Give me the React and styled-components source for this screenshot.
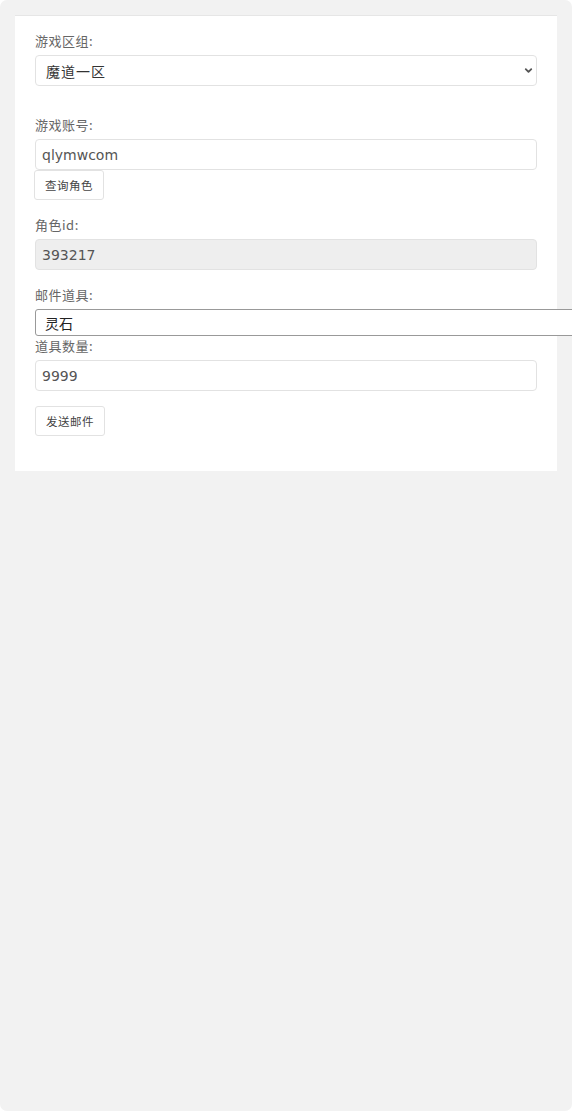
import React from "react";
import styled, { createGlobalStyle } from "styled-components";
import { ChevronDown } from "lucide-react";

const GlobalStyle = createGlobalStyle`
  html {
    background: #ffffff;
  }
  body {
    margin: 0;
    min-height: 1111px;
    background: #f2f2f2;
    border-radius: 7px;
    overflow-x: hidden;
    font-family: "DejaVu Sans", "Noto Sans CJK SC", sans-serif;
    color: #555;
  }
  * {
    box-sizing: border-box;
  }
`;

const Page = styled.div`
  padding: 15px;
`;

const Card = styled.form`
  background: #fff;
  border-top: 1px solid #e6e6e6;
  padding: 16px 20px 35px;
  display: flex;
  flex-direction: column;
`;

const Group = styled.div`
  display: flex;
  flex-direction: column;
  align-items: flex-start;
  margin-bottom: ${(p) => p.gap || 0}px;
`;

const Label = styled.label`
  font-family: "Noto Sans CJK SC", sans-serif;
  font-size: 13px;
  line-height: 18px;
  color: #666;
  margin-bottom: 5px;
  letter-spacing: 0.5px;
`;

const SelectWrap = styled.div`
  position: relative;
  width: 100%;
`;

const Select = styled.select`
  appearance: none;
  width: 100%;
  height: 31px;
  padding: 0 10px;
  border: 1px solid #e2e2e2;
  border-radius: 4px;
  background: #fff;
  font-family: "Noto Sans CJK SC", sans-serif;
  font-size: 14px;
  color: #333;
  letter-spacing: 1px;
  outline: none;
`;

const Chevron = styled.span`
  position: absolute;
  right: 3px;
  top: 10px;
  display: flex;
  color: #555;
  pointer-events: none;
`;

const Input = styled.input`
  width: 100%;
  height: 31px;
  padding: 0 6px;
  border: 1px solid #e2e2e2;
  border-radius: 4px;
  background: ${(p) => (p.readOnly ? "#eeeeee" : "#fff")};
  font-family: "DejaVu Sans", "Noto Sans CJK SC", sans-serif;
  font-size: 14px;
  color: #555;
  outline: none;
`;

const ItemSelect = styled.select`
  appearance: none;
  width: 545px;
  height: 27px;
  padding: 0 9px;
  border: 1px solid #999;
  border-radius: 3px;
  background: #fff;
  font-family: "Noto Sans CJK SC", sans-serif;
  font-size: 14px;
  color: #222;
  outline: none;
`;

const Button = styled.button`
  height: 30px;
  padding: 0 10px;
  margin-left: ${(p) => (p.tight ? -1 : 0)}px;
  border: 1px solid #e2e2e2;
  border-radius: 3px;
  background: #fff;
  font-family: "Noto Sans CJK SC", sans-serif;
  font-size: 11.5px;
  letter-spacing: 0.5px;
  color: #444;
  cursor: pointer;
`;

const App = () => {
  return (
    <>
      <GlobalStyle />
      <Page>
        <Card onSubmit={(e) => e.preventDefault()}>
          <Group gap={30}>
            <Label>游戏区组:</Label>
            <SelectWrap>
              <Select defaultValue="1">
                <option value="1">魔道一区</option>
              </Select>
              <Chevron>
                <ChevronDown size={11} strokeWidth={4} />
              </Chevron>
            </SelectWrap>
          </Group>

          <Group gap={16}>
            <Label>游戏账号:</Label>
            <Input defaultValue="qlymwcom" />
            <Button type="button" tight>
              查询角色
            </Button>
          </Group>

          <Group gap={16}>
            <Label>角色id:</Label>
            <Input readOnly value="393217" />
          </Group>

          <Group gap={1}>
            <Label>邮件道具:</Label>
            <ItemSelect defaultValue="lingshi">
              <option value="lingshi">灵石</option>
            </ItemSelect>
          </Group>

          <Group gap={15}>
            <Label>道具数量:</Label>
            <Input defaultValue="9999" />
          </Group>

          <Group>
            <Button type="submit">发送邮件</Button>
          </Group>
        </Card>
      </Page>
    </>
  );
};

export default App;
